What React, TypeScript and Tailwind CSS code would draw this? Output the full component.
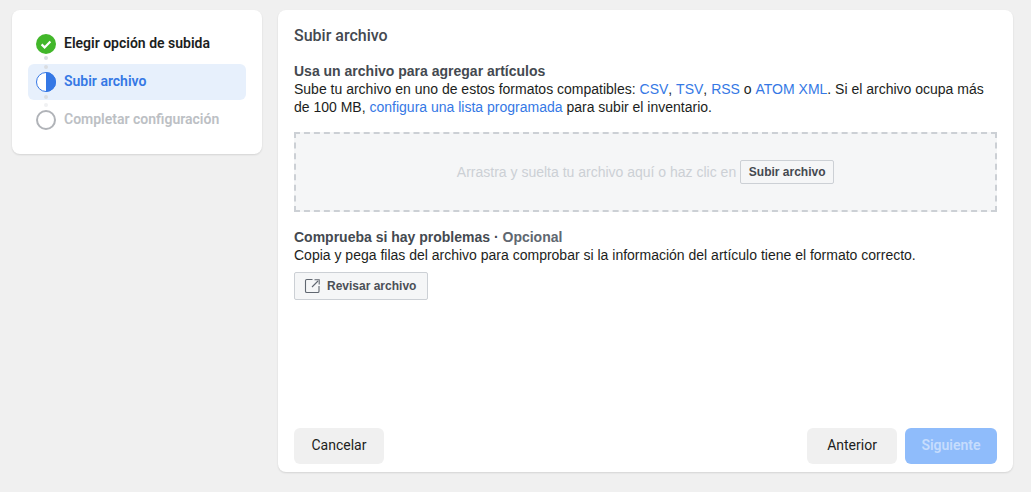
import React from "react";

const A = ({ children }: { children: React.ReactNode }) => <span className="text-[#3578e5]">{children}</span>;
const B = ({ children }: { children: React.ReactNode }) => <span className="inline-block text-[#3578e5]">{children}</span>;

export default function App() {
  return (
    <div className="w-[1031px] h-[492px] bg-[#f0f0f0] flex items-start gap-4 pl-3 pt-[10px] overflow-hidden font-['Liberation_Sans',Arial,sans-serif]">
      <aside className="w-[250px] h-[144px] bg-white rounded-[8px] shadow-[0_1px_2px_rgba(0,0,0,0.12)] p-4 flex flex-col gap-[2px] font-['Roboto',sans-serif] text-[14px] font-semibold">
        <div className="relative h-[36px] flex items-center gap-2 px-2 text-[#1c1e21]">
          <svg width="20" height="20" viewBox="0 0 20 20"><circle cx="10" cy="10" r="10" fill="#42b72a" /><path d="M5.6 10.4l3 3 5.8-6" fill="none" stroke="#fff" strokeWidth="2.2" /></svg>
          <span className="pb-[2px]">Elegir opción de subida</span>
          <span className="absolute left-[16px] top-[30px] w-[4px] h-[4px] rounded-full bg-[#dadde1]" />
        </div>
        <div className="relative h-[36px] flex items-center gap-2 px-2 rounded-[6px] bg-[#e7f0fc] text-[#3578e5]">
          <span className="absolute left-[16px] top-[1px] w-[4px] h-[4px] rounded-full bg-[#dadde1]" />
          <svg width="20" height="20" viewBox="0 0 20 20"><circle cx="10" cy="10" r="9.5" fill="#fff" stroke="#3578e5" /><path d="M10 0a10 10 0 0 1 0 20z" fill="#3578e5" /></svg>
          <span className="pb-[2px]">Subir archivo</span>
          <span className="absolute left-[16px] top-[31px] w-[4px] h-[4px] rounded-full bg-[#dadde1]" />
        </div>
        <div className="relative h-[36px] flex items-center gap-2 px-2 text-[#bcc0c4]">
          <span className="absolute left-[16px] top-[1px] w-[4px] h-[4px] rounded-full bg-[#f0f1f3]" />
          <svg width="20" height="20" viewBox="0 0 20 20"><circle cx="10" cy="10" r="9" fill="#fff" stroke="#b0b3b8" strokeWidth="2" /></svg>
          <span className="pb-[2px]">Completar configuración</span>
        </div>
      </aside>

      <main className="w-[735px] h-[462px] bg-white rounded-[8px] shadow-[0_1px_2px_rgba(0,0,0,0.12)] px-4 pt-[16px] pb-2 flex flex-col">
        <h1 className="font-['Roboto',sans-serif] text-[16px] leading-[19px] font-medium text-[#444950]">Subir archivo</h1>
        <h2 className="mt-[17px] text-[14px] leading-[18px] font-bold text-[#444950]">Usa un archivo para agregar artículos</h2>
        <p className="text-[14px] leading-[18px] text-[#1c1e21]">
          Sube tu archivo en uno de estos formatos compatibles: <B>CSV</B>, <B>TSV</B>, <B>RSS</B> o <B>ATOM XML</B>. Si el archivo ocupa más de 100 MB, <A>configura una lista programada</A> para subir el inventario.
        </p>
        <div className="mt-4 h-[80px] shrink-0 border-2 border-dashed border-[#ccd0d5] bg-[#f5f6f7] flex items-center justify-center gap-1 text-[14px] text-[#ccd0d5]">
          <span>Arrastra y suelta tu archivo aquí o haz clic en</span>
          <button className="w-[94px] h-[24px] rounded-[2px] border border-[#ccd0d5] bg-[#f5f6f7] text-[12px] font-bold text-[#444950]">Subir archivo</button>
        </div>
        <h2 className="mt-[16px] text-[14px] leading-[18px] font-bold text-[#444950]">Comprueba si hay problemas · <span className="text-[#606770]">Opcional</span></h2>
        <p className="text-[14px] leading-[18px] text-[#1c1e21]">Copia y pega filas del archivo para comprobar si la información del artículo tiene el formato correcto.</p>
        <button className="mt-[8px] w-[134px] h-[28px] shrink-0 flex items-center gap-[5px] pl-[9px] rounded-[2px] border border-[#ccd0d5] bg-[#f5f6f7] text-[12px] font-bold text-[#4b4f56]">
          <svg width="18" height="18" viewBox="0 0 18 18" fill="none" stroke="#606770" strokeWidth="1.1"><path d="M8.5 2.5H2.8A1.3 1.3 0 0 0 1.5 3.8v10.4a1.3 1.3 0 0 0 1.3 1.3h10.9a1.3 1.3 0 0 0 1.3-1.3V9" /><path d="M8 10L14 4M10.5 2.8H15.2V7.5" /></svg>
          Revisar archivo
        </button>
        <div className="mt-auto flex items-center gap-2 font-['Roboto',sans-serif] text-[14px]">
          <button className="w-[90px] h-[36px] pb-[2px] rounded-[6px] bg-[#f0f0f0] text-[#1c1e21]">Cancelar</button>
          <button className="ml-auto w-[90px] h-[36px] pb-[2px] rounded-[6px] bg-[#f0f0f0] text-[#1c1e21]">Anterior</button>
          <button className="w-[92px] h-[36px] pb-[2px] rounded-[6px] bg-[#8fbcfb] text-[#c6dcfd] font-semibold">Siguiente</button>
        </div>
      </main>
    </div>
  );
}
